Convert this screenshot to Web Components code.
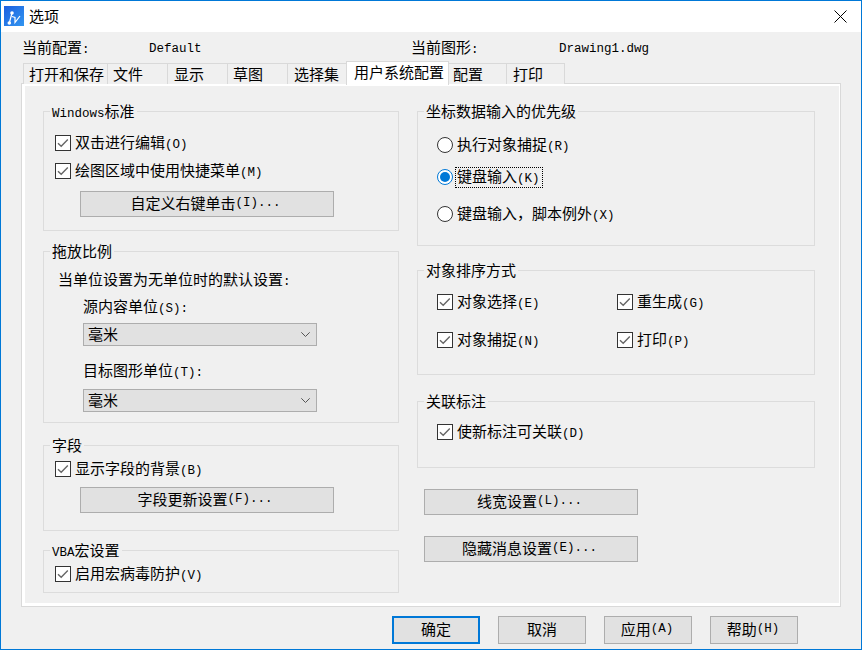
<!DOCTYPE html>
<html lang="zh">
<head>
<meta charset="utf-8">
<title>选项</title>
<style>
  html, body { margin: 0; padding: 0; }
  body { font: 15px/16px "Noto Sans CJK SC", sans-serif; color: #000; background: #f0f0f0; }
  i { font: normal 12.5px/16px "Liberation Mono", "Noto Sans CJK SC", monospace; }
</style>
</head>
<body>
<opt-dialog>
  <span slot="title">选项</span>

  <opt-info>
    <span>当前配置<i>:</i></span><i>Default</i>
    <span>当前图形<i>:</i></span><i>Drawing1.dwg</i>
  </opt-info>

  <opt-tabs>
    <opt-tab style="width:84px;padding-left:5px">打开和保存</opt-tab>
    <opt-tab style="width:60px;padding-left:5px">文件</opt-tab>
    <opt-tab style="width:60px;padding-left:6px">显示</opt-tab>
    <opt-tab style="width:60px;padding-left:5px">草图</opt-tab>
    <opt-tab style="width:59px;padding-left:6px">选择集</opt-tab>
    <opt-tab active style="width:103px;padding-left:7px">用户系统配置</opt-tab>
    <opt-tab style="width:58px;padding-left:4px">配置</opt-tab>
    <opt-tab style="width:59px;padding-left:6px">打印</opt-tab>
  </opt-tabs>

  <opt-page>
    <opt-column slot="left">
      <opt-group style="height:120px;padding:23px 0 0 11px">
        <span slot="legend"><i>Windows</i>标准</span>
        <opt-check>双击进行编辑<i>(O)</i></opt-check>
        <opt-check style="margin-top:12px">绘图区域中使用快捷菜单<i>(M)</i></opt-check>
        <opt-button style="width:254px;height:26px;margin:12px 0 0 25px;padding-right:3px">自定义右键单击<i>(I)...</i></opt-button>
      </opt-group>

      <opt-group style="height:172px;margin-top:20px;padding:19px 0 0 14px">
        <span slot="legend">拖放比例</span>
        <div style="height:16px">当单位设置为无单位时的默认设置<i>:</i></div>
        <div style="height:16px;margin:11px 0 0 25px">源内容单位<i>(S):</i></div>
        <opt-select style="margin:9px 0 0 25px">毫米</opt-select>
        <div style="height:16px;margin:16px 0 0 25px">目标图形单位<i>(T):</i></div>
        <opt-select style="margin:11px 0 0 25px">毫米</opt-select>
      </opt-group>

      <opt-group style="height:86px;margin-top:22px;padding:15px 0 0 11px">
        <span slot="legend">字段</span>
        <opt-check>显示字段的背景<i>(B)</i></opt-check>
        <opt-button style="width:254px;height:26px;margin:10px 0 0 25px;padding-right:4px">字段更新设置<i>(F)...</i></opt-button>
      </opt-group>

      <opt-group style="height:43px;margin-top:19px;padding:15px 0 0 11px">
        <span slot="legend"><i>VBA</i>宏设置</span>
        <opt-check>启用宏病毒防护<i>(V)</i></opt-check>
      </opt-group>
    </opt-column>

    <opt-column slot="right">
      <opt-group style="height:135px;padding:25px 0 0 19px">
        <span slot="legend">坐标数据输入的优先级</span>
        <opt-radio>执行对象捕捉<i>(R)</i></opt-radio>
        <opt-radio checked focused style="margin-top:16px">键盘输入<i>(K)</i></opt-radio>
        <opt-radio style="margin-top:21px">键盘输入，脚本例外<i>(X)</i></opt-radio>
      </opt-group>

      <opt-group style="height:105px;margin-top:24px;padding:23px 0 0 19px">
        <span slot="legend">对象排序方式</span>
        <opt-grid>
          <opt-check>对象选择<i>(E)</i></opt-check>
          <opt-check>重生成<i>(G)</i></opt-check>
          <opt-check>对象捕捉<i>(N)</i></opt-check>
          <opt-check>打印<i>(P)</i></opt-check>
        </opt-grid>
      </opt-group>

      <opt-group style="height:67px;margin-top:26px;padding:22px 0 0 19px">
        <span slot="legend">关联标注</span>
        <opt-check>使新标注可关联<i>(D)</i></opt-check>
      </opt-group>

      <opt-button style="width:214px;height:26px;margin:21px 0 0 7px;padding-right:3px">线宽设置<i>(L)...</i></opt-button>
      <opt-button style="width:214px;height:26px;margin:21px 0 0 7px;padding-right:3px">隐藏消息设置<i>(E)...</i></opt-button>
    </opt-column>
  </opt-page>

  <opt-actions>
    <opt-button primary style="width:88px;height:28px">确定</opt-button>
    <opt-button style="width:88px;height:28px">取消</opt-button>
    <opt-button style="width:88px;height:28px;padding-right:2px">应用<i>(A)</i></opt-button>
    <opt-button style="width:88px;height:28px;padding-right:2px">帮助<i>(H)</i></opt-button>
  </opt-actions>
</opt-dialog>

<script>
// small helper so every element below reads the same
function shadow(el, html) {
  el.attachShadow({ mode: "open" }).innerHTML = html;
}

class OptDialog extends HTMLElement {
  constructor() {
    super();
    shadow(this, `
      <style>
        :host { display: block; width: 862px; height: 650px; box-sizing: border-box; border: 1px solid #0078d7; background: #f0f0f0; overflow: hidden; }
        .bar { display: flex; align-items: center; height: 31px; background: #fff; padding: 0 14px 0 3px; }
        .bar .logo { width: 20px; height: 20px; margin-right: 5px; margin-top: -1px; }
        .bar .title { flex: 1; margin-top: -2px; }
        .bar .close { width: 13px; height: 13px; margin-top: -1px; }
      </style>
      <div class="bar">
        <svg class="logo" viewBox="0 0 20 20">
          <defs><linearGradient id="g" x1="0" y1="0" x2="1" y2="1"><stop offset="0" stop-color="#1c5fe0"/><stop offset="1" stop-color="#3296f0"/></linearGradient></defs>
          <rect width="20" height="20" fill="url(#g)"/>
          <path d="M5.3 17 L8 7 M8 10.5 L11 11.5 L11 16.5 L16 10" fill="none" stroke="#fff" stroke-width="1.2"/>
          <circle cx="8" cy="7" r="1.8" fill="#fff"/>
          <circle cx="5.3" cy="17" r="1.8" fill="#fff"/>
        </svg>
        <div class="title"><slot name="title"></slot></div>
        <svg class="close" viewBox="0 0 13 13"><path d="M.5 .5 L12.5 12.5 M12.5 .5 L.5 12.5" stroke="#000" stroke-width="1"/></svg>
      </div>
      <slot></slot>`);
  }
}

class OptInfo extends HTMLElement {
  constructor() {
    super();
    shadow(this, `
      <style>
        :host { display: grid; grid-template-columns: 127px 262px 148px auto; align-items: center; height: 30px; box-sizing: border-box; padding: 3px 0 0 21px; }
      </style>
      <slot></slot>`);
  }
}

class OptTabs extends HTMLElement {
  constructor() {
    super();
    shadow(this, `
      <style>
        :host { display: flex; align-items: flex-end; height: 23px; margin-left: 22px; margin-bottom: -2px; position: relative; z-index: 1; }
      </style>
      <slot></slot>`);
  }
}

class OptTab extends HTMLElement {
  constructor() {
    super();
    shadow(this, `
      <style>
        :host { display: flex; align-items: center; box-sizing: border-box; height: 21px; margin-bottom: 1px; border: 1px solid #d9d9d9; border-width: 1px 0 0 1px; background: #f0f0f0; padding-bottom: 1px; }
        :host(:last-child) { border-right-width: 1px; }
        :host([active]) { height: 24px; margin-bottom: 0; background: #fff; padding-bottom: 4px; border-right-width: 1px; margin-right: -1px; position: relative; z-index: 1; }
      </style>
      <slot></slot>`);
  }
}

class OptPage extends HTMLElement {
  constructor() {
    super();
    shadow(this, `
      <style>
        :host { display: flex; gap: 18px; box-sizing: border-box; width: 820px; height: 524px; margin-left: 20px; background: #f0f0f0; border: 1px solid #d9d9d9; padding: 27px 0 0 21px; box-shadow: inset 3px 2px 0 #fff, inset -1px -3px 0 #fff; }
      </style>
      <slot name="left"></slot>
      <slot name="right"></slot>`);
  }
}

class OptColumn extends HTMLElement {
  constructor() {
    super();
    shadow(this, `
      <style>
        :host { display: flex; flex-direction: column; align-items: stretch; width: 356px; }
        :host([slot="right"]) { width: 398px; }
      </style>
      <slot></slot>`);
  }
}

class OptGroup extends HTMLElement {
  constructor() {
    super();
    shadow(this, `
      <style>
        :host { display: flex; flex-direction: column; align-items: flex-start; flex: none; box-sizing: border-box; position: relative; border: 1px solid #dcdcdc; }
        .legend { position: absolute; left: 6px; top: -9px; padding: 0 2px; background: #f0f0f0; white-space: nowrap; }
      </style>
      <div class="legend"><slot name="legend"></slot></div>
      <slot></slot>`);
  }
}

class OptCheck extends HTMLElement {
  constructor() {
    super();
    shadow(this, `
      <style>
        :host { display: flex; align-items: center; gap: 4px; height: 16px; white-space: nowrap; }
        svg { width: 16px; height: 16px; flex: none; }
      </style>
      <svg viewBox="0 0 16 16">
        <rect x=".5" y=".5" width="15" height="15" fill="#fff" stroke="#333"/>
        <path d="M3 8.2 L6.2 11.2 L12.8 4.6" fill="none" stroke="#666" stroke-width="1.4"/>
      </svg>
      <span><slot></slot></span>`);
  }
}

class OptRadio extends HTMLElement {
  constructor() {
    super();
    const on = this.hasAttribute("checked");
    shadow(this, `
      <style>
        :host { display: flex; align-items: center; gap: 4px; height: 16px; white-space: nowrap; }
        svg { width: 16px; height: 16px; flex: none; }
        :host([focused]) span { outline: 1px dotted #000; padding: 0 2px 0 1px; margin: 0 -2px 0 -1px; }
      </style>
      <svg viewBox="0 0 16 16">
        <circle cx="8" cy="8" r="7.5" fill="#fff" stroke="${on ? "#0078d7" : "#333"}"/>
        ${on ? '<circle cx="8" cy="8" r="5" fill="#0078d7"/>' : ""}
      </svg>
      <span><slot></slot></span>`);
  }
}

class OptButton extends HTMLElement {
  constructor() {
    super();
    shadow(this, `
      <style>
        :host { display: flex; align-items: center; justify-content: center; flex: none; box-sizing: border-box; background: #e1e1e1; border: 1px solid #adadad; padding-bottom: 2px; white-space: nowrap; }
        :host([primary]) { border: 2px solid #0078d7; }
      </style>
      <slot></slot>`);
  }
}

class OptSelect extends HTMLElement {
  constructor() {
    super();
    shadow(this, `
      <style>
        :host { display: flex; align-items: center; justify-content: space-between; flex: none; box-sizing: border-box; width: 234px; height: 23px; padding: 0 6px 1px 4px; background: #e1e1e1; border: 1px solid #adadad; }
        svg { width: 9px; height: 5px; }
      </style>
      <slot></slot>
      <svg viewBox="0 0 9 5"><path d="M.3 .3 L4.5 4.5 L8.7 .3" fill="none" stroke="#555" stroke-width="1"/></svg>`);
  }
}

class OptGrid extends HTMLElement {
  constructor() {
    super();
    shadow(this, `
      <style>
        :host { display: grid; grid-template-columns: 180px auto; row-gap: 22px; }
      </style>
      <slot></slot>`);
  }
}

class OptActions extends HTMLElement {
  constructor() {
    super();
    shadow(this, `
      <style>
        :host { display: flex; justify-content: flex-end; gap: 18px; padding: 9px 63px 0 0; }
      </style>
      <slot></slot>`);
  }
}

customElements.define("opt-dialog", OptDialog);
customElements.define("opt-info", OptInfo);
customElements.define("opt-tabs", OptTabs);
customElements.define("opt-tab", OptTab);
customElements.define("opt-page", OptPage);
customElements.define("opt-column", OptColumn);
customElements.define("opt-group", OptGroup);
customElements.define("opt-check", OptCheck);
customElements.define("opt-radio", OptRadio);
customElements.define("opt-button", OptButton);
customElements.define("opt-select", OptSelect);
customElements.define("opt-grid", OptGrid);
customElements.define("opt-actions", OptActions);
</script>
</body>
</html>
